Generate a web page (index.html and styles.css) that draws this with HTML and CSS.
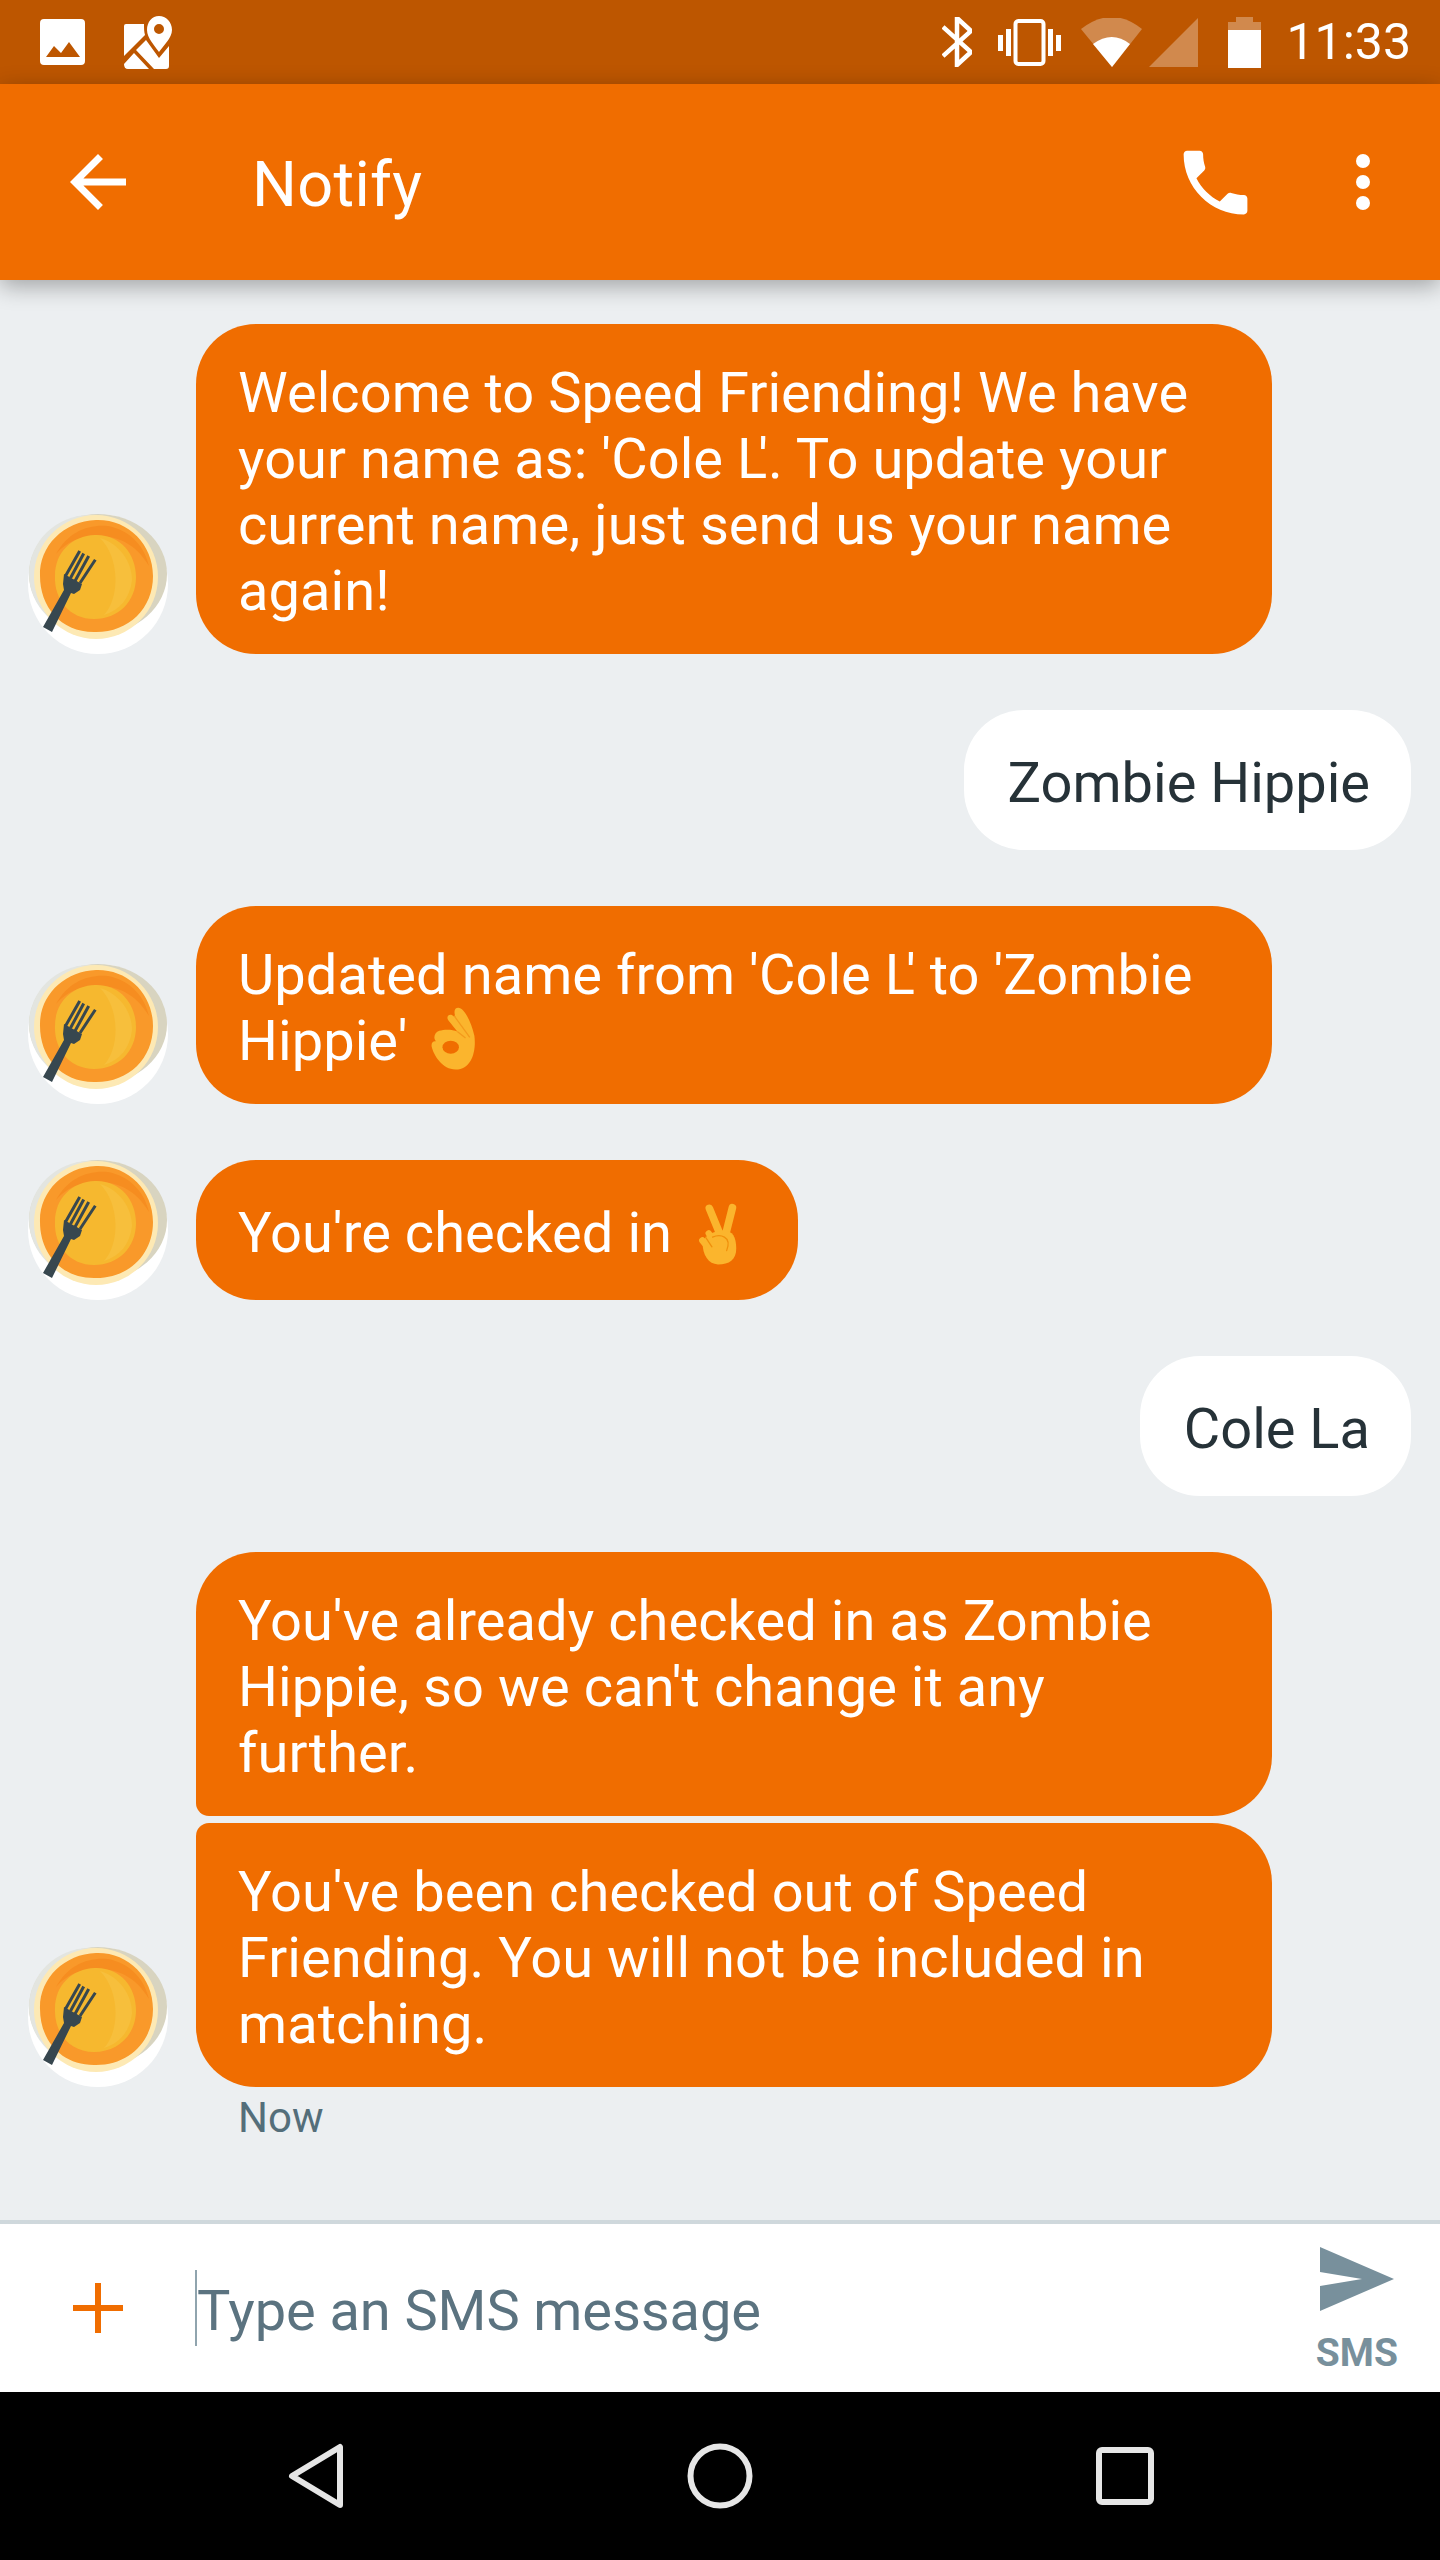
FILE: index.html
```html
<!DOCTYPE html>
<html lang="en">
<head>
  <meta charset="UTF-8">
  <meta name="viewport" content="width=device-width, initial-scale=1.0">
  <title>Notify</title>
  <link rel="stylesheet" href="styles.css">
</head>
<body>
  <svg class="defs" width="0" height="0">
    <symbol id="avatar" viewBox="0 0 140 140">
      <circle cx="70" cy="70" r="70" fill="#ffffff"/>
      <ellipse cx="70" cy="60" rx="69" ry="60" fill="#d8d4c0"/>
      <ellipse cx="62" cy="60" rx="61" ry="59" fill="#e3e5e0"/>
      <circle cx="68" cy="63" r="62" fill="#fde9b4"/>
      <path d="M68 6C100 5 125 30 125 62 125 95 100 119 66 118 32 118 12 92 12 62 11 32 36 7 68 6Z" fill="#f9992a"/>
      <path d="M28 40C40 18 60 10 80 12 100 16 116 30 121 52 108 30 90 22 70 22 52 22 38 28 28 40Z" fill="#f68d20"/>
      <path d="M67 21C92 20 108 40 108 63 108 88 90 105 66 105 42 105 26 86 27 62 27 38 44 22 67 21Z" fill="#f6b82f"/>
      <path d="M72 24C92 30 104 48 104 66 102 84 92 96 76 101 92 84 92 44 72 24Z" fill="#f7bf3c"/>
      <path d="M37.500 62 51.700 37M42.500 64 55.700 39.500M47 67 60.700 42M52 69 67.300 45.700" fill="none" stroke="#37474f" stroke-width="3"/>
      <path d="M36 60 54 70 52 76 46 80 43 79 24 118 15 113 36 76 35 70z" fill="#37474f"/>
    </symbol>
    <symbol id="ok-hand" viewBox="100 55 140 200">
      <path d="M183 60C200 60 222 100 232 145 238 190 225 248 175 248 135 248 108 205 102 178 100 165 108 160 115 162 105 150 112 135 125 130 140 125 165 125 180 132L152 97C145 85 158 75 168 85L175 90C168 70 172 60 183 60Z" fill="#fbb52d"/>
      <ellipse cx="160" cy="180" rx="25" ry="20" fill="#f06d00"/>
      <path d="M170 84 218 150M180 132 205 152" fill="none" stroke="#f39a1c" stroke-width="4"/>
    </symbol>
    <symbol id="peace" viewBox="80 60 130 200">
      <path d="M118 80 153 165M190 78 168 165" fill="none" stroke="#fbb52d" stroke-width="24" stroke-linecap="round"/>
      <path d="M97 190C97 170 125 150 165 150 190 150 202 170 202 205 202 240 180 255 145 255 115 255 97 225 97 190Z" fill="#fbb52d"/>
      <path d="M96 180 118 208M116 158 136 190" fill="none" stroke="#fbb52d" stroke-width="20" stroke-linecap="round"/>
      <path d="M106 170 126 200M128 170C150 160 190 165 172 212" fill="none" stroke="#f0900c" stroke-width="4" stroke-linecap="round"/>
    </symbol>
  </svg>

  <div class="phone">
    <div class="status-bar">
      <div class="status-left">
        <svg class="ico-image" width="45" height="46" viewBox="40 19 45 46">
          <path fill="#fff" fill-rule="evenodd" d="M44 19H81Q85 19 85 23V61Q85 65 81 65H44Q40 65 40 61V23Q40 19 44 19ZM46 57H80L69 42 61 53 54 46Z"/>
        </svg>
        <svg class="ico-map" width="48" height="53" viewBox="124 14 48 53">
          <path fill="#fff" d="M126 22H144C144 26 144 30 145 33L124 54V24Q124 22 126 22ZM134 51 149 67H128Q124 67 124 62ZM146 38 136 48 154 67H166Q169 67 169 64V44L159 56Z"/>
          <path fill="#fff" fill-rule="evenodd" d="M159 14C152 14 147 20 147 28 147 36 155 44 159 50 163 44 172 36 172 28 172 20 166 14 159 14ZM159 22A5 5 0 1 1 159 32 5 5 0 1 1 159 22Z"/>
        </svg>
      </div>
      <div class="status-right">
        <svg class="ico-bt" width="30" height="50" viewBox="943 18 30 50">
          <path fill="none" stroke="#fff" stroke-width="4.500" d="M944 28 972 53 958 66V19L972 32 944 57"/>
        </svg>
        <svg class="ico-vib" width="63" height="47" viewBox="999 19 63 47">
          <rect x="1016.500" y="21" width="28" height="43" rx="3" fill="none" stroke="#fff" stroke-width="4"/>
          <path fill="#fff" d="M999 35h5v16h-5zM1007 29h5v27h-5zM1049 29h5v27h-5zM1057 35h5v16h-5z"/>
        </svg>
        <svg class="ico-wifi" width="61" height="49" viewBox="1082 17 61 49">
          <path fill="#fff" opacity=".3" d="M1082 28Q1113 4 1143 28L1113 66Z"/>
          <path fill="#fff" d="M1094 43Q1113 29 1131 43L1113 66Z"/>
        </svg>
        <svg class="ico-signal" width="49" height="49" viewBox="1150 17 49 49">
          <path fill="#fff" opacity=".3" d="M1150 66 1199 17V66Z"/>
        </svg>
        <svg class="ico-batt" width="33" height="51" viewBox="1229 16 33 51">
          <path fill="#fff" opacity=".3" d="M1237 16h17v5h8v8h-33v-8h8z"/>
          <rect x="1229" y="29" width="33" height="38" fill="#fff"/>
        </svg>
        <span class="clock">11:33</span>
      </div>
    </div>

    <header class="app-bar">
      <svg class="back" width="84" height="84" viewBox="0 0 24 24">
        <path fill="#fff" d="M20 11H7.830l5.590-5.590L12 4l-8 8 8 8 1.410-1.410L7.830 13H20v-2z"/>
      </svg>
      <div class="title">Notify</div>
      <svg class="call" width="85" height="85" viewBox="0 0 24 24">
        <path fill="#fff" d="M6.620 10.790c1.440 2.830 3.760 5.140 6.590 6.590l2.200-2.200c.27-.27.67-.36 1.020-.24 1.120.37 2.330.57 3.570.57.55 0 1 .45 1 1V20c0 .55-.45 1-1 1-9.390 0-17-7.610-17-17 0-.55.45-1 1-1h3.500c.55 0 1 .45 1 1 0 1.250.2 2.450.57 3.570.11.35.03.74-.25 1.020l-2.200 2.200z"/>
      </svg>
      <svg class="more" width="84" height="84" viewBox="0 0 84 84">
        <circle cx="42" cy="21" r="7" fill="#fff"/>
        <circle cx="42" cy="42" r="7" fill="#fff"/>
        <circle cx="42" cy="63" r="7" fill="#fff"/>
      </svg>
    </header>

    <main class="messages">
      <div class="row">
        <svg class="avatar"><use href="#avatar"/></svg>
        <div class="bubble in wide">
          <div>
            <div>Welcome to Speed Friending! We have</div>
            <div>your name as: 'Cole <span class="kern">L</span>'. To update your</div>
            <div>current name, just send us your name again!</div>
          </div>
        </div>
      </div>
      <div class="row out">
        <div class="bubble mine">Zombie Hippie</div>
      </div>
      <div class="row">
        <svg class="avatar"><use href="#avatar"/></svg>
        <div class="bubble in wide">
          <div>
            <div>Updated name from 'Cole <span class="kern">L</span>' to 'Zombie</div>
            <div>Hippie' <svg class="emoji-ok"><use href="#ok-hand"/></svg></div>
          </div>
        </div>
      </div>
      <div class="row">
        <svg class="avatar"><use href="#avatar"/></svg>
        <div class="bubble in">
          <div>You're checked in <svg class="emoji-peace"><use href="#peace"/></svg></div>
        </div>
      </div>
      <div class="row out">
        <div class="bubble mine">Cole La</div>
      </div>
      <div class="row">
        <svg class="avatar"><use href="#avatar"/></svg>
        <div class="stack">
          <div class="bubble in first"><div>You've already checked in as Zombie Hippie, so we can't change it any further.</div></div>
          <div class="bubble in last"><div>You've been checked out of Speed Friending. You will not be included in matching.</div></div>
        </div>
      </div>
      <div class="timestamp">Now</div>
    </main>

    <div class="composer">
      <svg class="plus" width="50" height="50" viewBox="0 0 50 50">
        <path fill="#f06d00" d="M22 0h6v22h22v6H28v22h-6V28H0v-6h22z"/>
      </svg>
      <div class="input"><span class="placeholder">Type an SMS message</span></div>
      <div class="send">
        <svg width="74" height="64" viewBox="0 0 74 64">
          <path fill="#78909c" d="M0 0 74 32 0 64V39L42 32 0 25z"/>
        </svg>
        <span class="send-label">SMS</span>
      </div>
    </div>

    <nav class="nav-bar">
      <svg width="56" height="66" viewBox="0 0 56 66">
        <path d="M52 4V62L4 33Z" fill="none" stroke="#e6e6e6" stroke-width="6" stroke-linejoin="round"/>
      </svg>
      <svg width="66" height="66" viewBox="0 0 66 66">
        <circle cx="33" cy="33" r="29.500" fill="none" stroke="#e6e6e6" stroke-width="6"/>
      </svg>
      <svg width="58" height="58" viewBox="0 0 58 58">
        <rect x="3" y="3" width="52" height="52" rx="3" fill="none" stroke="#e6e6e6" stroke-width="6"/>
      </svg>
    </nav>
  </div>
</body>
</html>
```

FILE: styles.css
```css
body {
  margin: 0;
  font-family: Roboto, "Liberation Sans", sans-serif;
  background-color: #eceff1;
}
.defs {
  display: block;
  height: 0;
}
.phone {
  width: 1440px;
  height: 2560px;
  display: flex;
  flex-direction: column;
  overflow: hidden;
}

/* status bar */
.status-bar {
  height: 84px;
  flex: none;
  background: #bd5600;
  display: flex;
  justify-content: space-between;
  align-items: center;
  padding: 0 29px 0 40px;
  color: #fff;
}
.status-left, .status-right {
  display: flex;
  align-items: center;
}
.ico-map { margin-left: 39px; }
.ico-vib { margin-left: 26px; }
.ico-wifi { margin-left: 20px; }
.ico-signal { margin-left: 7px; }
.ico-batt { margin-left: 30px; }
.clock {
  margin-left: 25px;
  font-size: 50px;
  line-height: 84px;
}

/* app bar */
.app-bar {
  height: 196px;
  flex: none;
  background: #f06d00;
  display: flex;
  align-items: center;
  padding: 0 35px 0 56px;
  color: #fff;
  position: relative;
  z-index: 2;
  box-shadow: 0 6px 22px rgba(0, 0, 0, 0.32);
}
.title {
  margin-left: 112px;
  padding-top: 4px;
  flex: 1;
  font-size: 63px;
  letter-spacing: 0.3px;
}
.more { margin-left: 63px; }

/* conversation */
.messages {
  flex: 1;
  padding: 44px 29px 0 28px;
  display: flex;
  flex-direction: column;
  gap: 56px;
}
.row {
  display: flex;
  align-items: flex-end;
  gap: 28px;
}
.row.out {
  justify-content: flex-end;
}
.avatar {
  width: 140px;
  height: 140px;
  flex: none;
}
.stack {
  display: flex;
  flex-direction: column;
  gap: 7px;
}
.bubble {
  box-sizing: border-box;
  max-width: 1076px;
  min-height: 140px;
  display: flex;
  align-items: center;
  padding: 36px 43px 30px 42px;
  border-radius: 60px;
  font-size: 56px;
  line-height: 66px;
  letter-spacing: 0.05px;
}
.bubble.wide {
  width: 1076px;
}
.bubble.in {
  background: #f06d00;
  color: #fff;
}
.bubble.mine {
  background: #fff;
  color: #263238;
  padding-left: 44px;
  padding-right: 41px;
  letter-spacing: 0;
}
.bubble.first { border-bottom-left-radius: 13px; }
.bubble.last { border-top-left-radius: 13px; }
.kern { letter-spacing: -9px; }
.emoji-ok {
  width: 46px;
  height: 66px;
  margin: -16px 0 -16px 10px;
  vertical-align: 4px;
}
.emoji-peace {
  width: 42px;
  height: 64px;
  margin: -16px 16px -16px 11px;
  vertical-align: 2px;
}
.timestamp {
  margin: -50px 0 0 210px;
  font-size: 42px;
  line-height: 50px;
  color: #546e7a;
}

/* compose box */
.composer {
  height: 168px;
  flex: none;
  background: #fff;
  border-top: 4px solid #cfd8dc;
  display: flex;
  align-items: center;
  padding: 0 42px 0 73px;
}
.input {
  flex: 1;
  margin-left: 72px;
}
.placeholder {
  display: inline-block;
  border-left: 2px solid #90a4ae;
  padding-top: 6px;
  font-size: 56px;
  line-height: 70px;
  color: #5b7380;
  letter-spacing: -0.1px;
}
.send {
  display: flex;
  flex-direction: column;
  align-items: center;
  margin-top: 7px;
  color: #78909c;
}
.send-label {
  font-size: 39px;
  font-weight: 700;
  line-height: 46px;
  margin-top: 19px;
}

/* android nav */
.nav-bar {
  height: 168px;
  flex: none;
  background: #000;
  display: flex;
  align-items: center;
  justify-content: space-between;
  padding: 0 286px 0 288px;
}
```
